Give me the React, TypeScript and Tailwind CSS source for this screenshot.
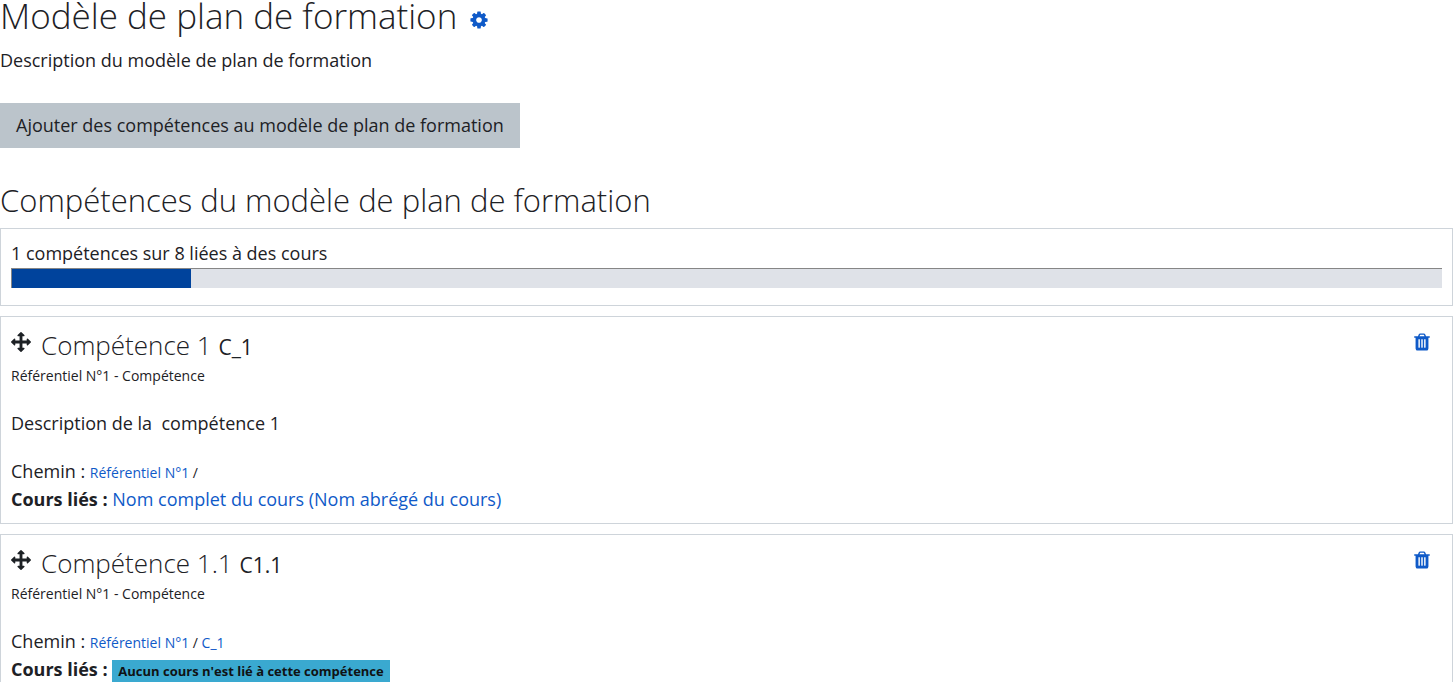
import type { ReactNode } from "react";

type IconProps = { path: string };

type Link = { label: string; href: string };

type Competency = {
  name: string;
  idNumber: string;
  framework: string;
  description?: string;
  path: Link[];
  courses: Link[];
};

const COG =
  "M1152 896q0-106-75-181t-181-75-181 75-75 181 75 181 181 75 181-75 75-181zm512-109v222q0 12-8 23t-20 13l-185 28q-19 54-39 91 35 50 107 138 10 12 10 25t-9 23q-27 37-99 108t-94 71q-12 0-26-9l-138-108q-44 23-91 38-16 136-29 186-7 28-36 28h-222q-14 0-24.500-8.500t-11.500-21.500l-28-184q-49-16-90-37l-141 107q-10 9-25 9-14 0-25-11-126-114-165-168-7-10-7-23 0-12 8-23 15-21 51-66.500t54-70.500q-27-50-41-99l-183-27q-13-2-21-12.500t-8-23.500v-222q0-12 8-23t19-13l186-28q14-46 39-92-40-57-107-138-10-12-10-24 0-10 9-23 26-36 98.500-107.500t94.500-71.500q13 0 26 10l138 107q44-23 91-38 16-136 29-186 7-28 36-28h222q14 0 24.500 8.500t11.500 21.500l28 184q49 16 90 37l142-107q9-9 24-9 13 0 25 10 129 119 165 170 7 8 7 22 0 12-8 23-15 21-51 66.500t-54 70.500q26 50 41 98l183 28q13 2 21 12.500t8 23.500z";
const ARROWS =
  "M1792 896q0 26-19 45l-256 256q-19 19-45 19t-45-19-19-45v-128h-384v384h128q26 0 45 19t19 45-19 45l-256 256q-19 19-45 19t-45-19l-256-256q-19-19-19-45t19-45 45-19h128v-384h-384v128q0 26-19 45t-45 19-45-19l-256-256q-19-19-19-45t19-45l256-256q19-19 45-19t45 19 19 45v128h384v-384h-128q-26 0-45-19t-19-45 19-45l256-256q19-19 45-19t45 19l256 256q19 19 19 45t-19 45-45 19h-128v384h384v-128q0-26 19-45t45-19 45 19l256 256q19 19 19 45z";
const TRASH =
  "M704 1376v-704q0-14-9-23t-23-9h-64q-14 0-23 9t-9 23v704q0 14 9 23t23 9h64q14 0 23-9t9-23zm256 0v-704q0-14-9-23t-23-9h-64q-14 0-23 9t-9 23v704q0 14 9 23t23 9h64q14 0 23-9t9-23zm256 0v-704q0-14-9-23t-23-9h-64q-14 0-23 9t-9 23v704q0 14 9 23t23 9h64q14 0 23-9t9-23zm-544-992h448l-48-117q-7-9-17-11h-317q-10 2-17 11zm928 32v64q0 14-9 23t-23 9h-96v948q0 83-47 143.500t-113 60.500h-832q-66 0-113-58.500t-47-141.500v-952h-96q-14 0-23-9t-9-23v-64q0-14 9-23t23-9h309l70-167q15-37 54-63t79-26h320q40 0 79 26t54 63l70 167h309q14 0 23 9t9 23z";

const competencies: Competency[] = [
  {
    name: "Compétence 1",
    idNumber: "C_1",
    framework: "Référentiel N°1 - Compétence",
    description: "Description de la \u00a0compétence 1",
    path: [{ label: "Référentiel N°1", href: "#framework" }],
    courses: [
      { label: "Nom complet du cours (Nom abrégé du cours)", href: "#course" },
    ],
  },
  {
    name: "Compétence 1.1",
    idNumber: "C1.1",
    framework: "Référentiel N°1 - Compétence",
    path: [
      { label: "Référentiel N°1", href: "#framework" },
      { label: "C_1", href: "#c1" },
    ],
    courses: [],
  },
];

const Icon = ({ path }: IconProps) => (
  <svg viewBox="0 0 1792 1792" className="size-5 fill-current" aria-hidden="true">
    <path d={path} />
  </svg>
);

const Card = ({ children }: { children: ReactNode }) => (
  <div className="border border-[#ced4da] p-[10px]">{children}</div>
);

const CompetencyCard = ({ competency }: { competency: Competency }) => (
  <Card>
    <div className="flex items-start justify-between">
      <div className="flex items-start gap-[10px]">
        <button type="button" aria-label="Déplacer" className="pt-[5px]">
          <Icon path={ARROWS} />
        </button>
        <h4 className="text-[26px] leading-9 font-light">
          {competency.name}{" "}
          <span className="text-[21px] leading-none font-normal">
            {competency.idNumber}
          </span>
        </h4>
      </div>
      <button
        type="button"
        aria-label={`Supprimer ${competency.name}`}
        className="pt-[5px] pr-[10px] text-[#0f5ac8]"
      >
        <Icon path={TRASH} />
      </button>
    </div>
    <p className="text-sm leading-[26px]">{competency.framework}</p>
    {competency.description ? (
      <p className="mt-5">{competency.description}</p>
    ) : null}
    <p className="mt-5">
      Chemin :{" "}
      <span className="text-sm leading-none">
        {competency.path.map((item, i) => (
          <span key={item.label}>
            <a href={item.href} className="text-[#0f5ac8]">
              {item.label}
            </a>
            {i === 0 ? " / " : null}
          </span>
        ))}
      </span>
    </p>
    <p>
      <strong className="font-bold">Cours liés :</strong>{" "}
      {competency.courses.length > 0 ? (
        competency.courses.map((course) => (
          <a key={course.label} href={course.href} className="text-[#0f5ac8]">
            {course.label}
          </a>
        ))
      ) : (
        <span className="bg-[#3aa9d0] px-[6px] py-[2px] text-[13px] leading-none font-bold text-[#101214]">
          Aucun cours n'est lié à cette compétence
        </span>
      )}
    </p>
  </Card>
);

export default function App() {
  return (
    <main className="h-screen overflow-hidden bg-white font-['Open_Sans','Noto_Sans',sans-serif] text-[18px] leading-7 text-[#1d2125]">
      <div className="flex items-center gap-3">
        <h2 className="text-[35px] leading-8 font-light">Modèle de plan de formation</h2>
        <a href="#edit" aria-label="Modifier" className="pt-2 text-[#0f5ac8]">
          <Icon path={COG} />
        </a>
      </div>
      <p className="mt-[14px]">Description du modèle de plan de formation</p>
      <button
        type="button"
        className="mt-[29px] block bg-[#bbc4cb] px-4 py-2 leading-[29px]"
      >
        Ajouter des compétences au modèle de plan de formation
      </button>
      <h3 className="mt-8 mb-2 text-[31px] leading-10 font-light">
        Compétences du modèle de plan de formation
      </h3>
      <div className="flex flex-col gap-[10px]">
        <Card>
          <p id="progress-label" className="leading-[29px]">
            1 compétences sur 8 liées à des cours
          </p>
          <div
            role="progressbar"
            aria-labelledby="progress-label"
            aria-valuenow={1}
            aria-valuemin={0}
            aria-valuemax={8}
            className="mb-[7px] h-5 border-t border-l border-[#868686] bg-[#dfe2e8]"
          >
            <div className="h-full w-1/8 bg-[#00439c]" />
          </div>
        </Card>
        {competencies.map((competency) => (
          <CompetencyCard key={competency.idNumber} competency={competency} />
        ))}
      </div>
    </main>
  );
}
